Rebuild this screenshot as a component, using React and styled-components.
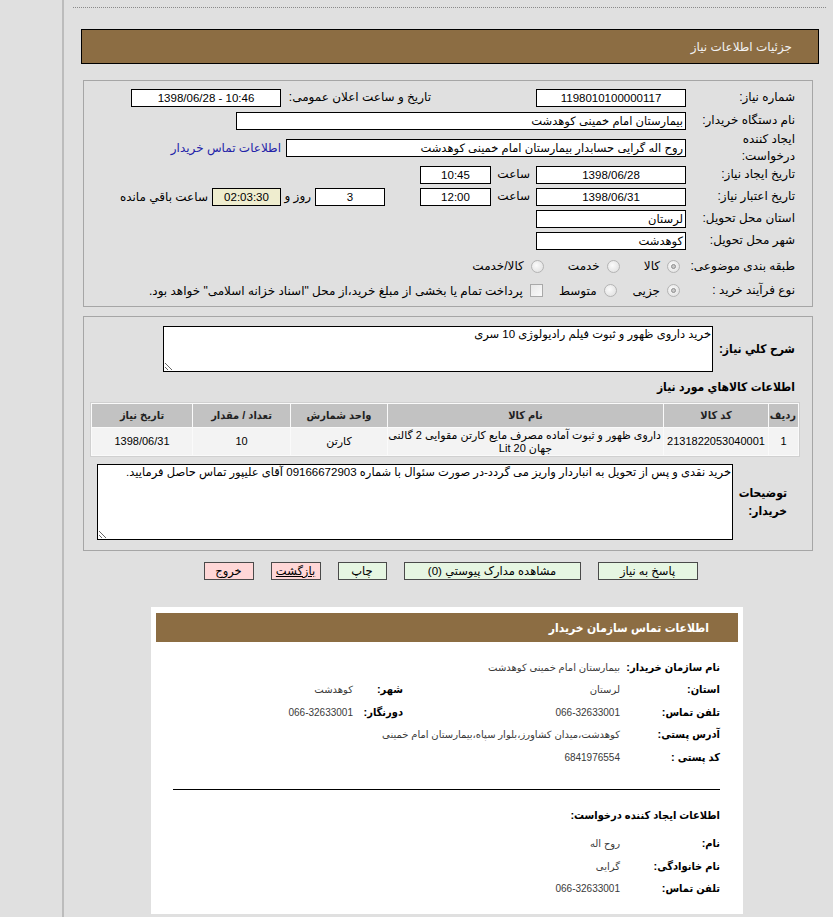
import React from 'react';
import styled, { createGlobalStyle } from 'styled-components';

const GlobalStyle = createGlobalStyle`
  html, body {
    margin: 0;
    padding: 0;
    background: #e0e0e0;
  }
  body {
    font-family: "Liberation Sans", "DejaVu Sans", sans-serif;
    font-size: 12px;
    color: #000;
  }
`;

const BROWN = '#8c6d43';

const Page = styled.div`
  display: flex;
  min-height: 917px;
`;

const Gutter = styled.div`
  width: 62px;
  flex-shrink: 0;
  border-right: 2px solid #bcbcbc;
`;

const Main = styled.div`
  flex: 1;
  min-width: 0;
  padding: 7px 7px 4px 9px;
  direction: rtl;
`;

const DottedRule = styled.div`
  border-top: 1px dotted #8a8a8a;
`;

const TitleBar = styled.div`
  margin: 21px 7px 0 8px;
  height: 33px;
  border: 1px solid #000;
  background: ${BROWN};
  color: #f2f2f2;
  display: flex;
  align-items: center;
  padding-right: 26px;
  font-size: 12px;
`;

const Panel = styled.div`
  margin: ${p => p.top}px 13px 0 10px;
  border: 1px solid #a6a6a6;
  padding: ${p => p.pad};
`;

const Row = styled.div`
  display: flex;
  align-items: center;
  height: ${p => p.h || 23}px;
  padding-right: ${p => p.inset || 0}px;
`;

const Label = styled.div`
  width: ${p => p.w || 109}px;
  flex-shrink: 0;
  box-sizing: border-box;
  padding-right: ${p => p.pr || 0}px;
  white-space: nowrap;
  line-height: 17px;
`;

const BoldLabel = styled.div`
  width: ${p => p.w}px;
  flex-shrink: 0;
  font-weight: bold;
  font-stretch: condensed;
  line-height: 18px;
  white-space: nowrap;
`;

const Field = styled.div`
  width: ${p => p.w}px;
  height: 18px;
  box-sizing: border-box;
  flex-shrink: 0;
  border: 1px solid #000;
  background: ${p => p.bg || '#fff'};
  line-height: 16px;
  font-size: 11.5px;
  padding: 0 2px;
  white-space: nowrap;
  overflow: hidden;
  text-align: ${p => (p.center ? 'center' : 'right')};
  direction: ${p => (p.ltr ? 'ltr' : 'rtl')};
`;

const Gap = styled.div`
  width: ${p => p.w}px;
  flex-shrink: 0;
`;

const Note = styled.span`
  white-space: nowrap;
`;

const Link = styled.a`
  color: #2323a8;
  text-decoration: none;
  white-space: nowrap;
  cursor: pointer;
`;

const Choices = styled.div`
  display: flex;
  align-items: center;
  gap: ${p => p.gap}px;
`;

const Choice = styled.label`
  display: flex;
  align-items: center;
  gap: 7px;
  white-space: nowrap;
`;

const Radio = styled.span`
  width: 13px;
  height: 13px;
  box-sizing: border-box;
  border-radius: 50%;
  border: 1px solid #b4b4b4;
  background: radial-gradient(circle at 40% 40%, #fbfbfb, #dcdcdc);
  display: inline-flex;
  align-items: center;
  justify-content: center;
  &::after {
    content: '';
    width: 5px;
    height: 5px;
    border-radius: 50%;
    box-sizing: border-box;
    border: ${p => (p.checked ? '1px solid #8f8f8f' : 'none')};
    background: ${p => (p.checked ? '#c8c8c8' : 'transparent')};
  }
`;

const Box = styled.span`
  width: 13px;
  height: 13px;
  box-sizing: border-box;
  border: 1px solid #a9a9a9;
  background: linear-gradient(135deg, #e8e8e8, #fafafa);
`;

const TextArea = styled.textarea`
  width: ${p => p.w}px;
  height: ${p => p.h}px;
  box-sizing: border-box;
  flex-shrink: 0;
  border: 1px solid #000;
  background: #fff;
  font: inherit;
  font-size: 11.5px;
  padding: 0 1px;
  resize: both;
  direction: rtl;
  color: #000;
`;

const SectionTitle = styled.div`
  font-weight: bold;
  font-stretch: condensed;
  padding-right: 5px;
  height: 15px;
  line-height: 15px;
  margin: 8px 0 7px;
`;

const Table = styled.table`
  width: 703px;
  table-layout: fixed;
  border-collapse: separate;
  border-spacing: 1px;
  border: 1px solid #d0d0d0;
  background: #fafafa;
  font-size: 11px;
`;

const Th = styled.th`
  height: 23px;
  background: #c2c2c2;
  color: #222;
  font-weight: bold;
  font-stretch: condensed;
  padding: 0 2px;
`;

const Td = styled.td`
  height: 27px;
  background: #f3f3f3;
  text-align: center;
  padding: 0 2px;
  line-height: 13px;
  white-space: nowrap;
`;

const Buttons = styled.div`
  display: flex;
  justify-content: center;
  gap: 17px;
  margin: 11px 0 0;
  padding-left: 2px;
`;

const Button = styled.button`
  width: ${p => p.w}px;
  height: 18px;
  box-sizing: border-box;
  border: 1px solid #4a4a4a;
  background: ${p => (p.red ? '#ffd7d7' : '#e6f6e2')};
  font: inherit;
  font-size: 11.5px;
  color: #000;
  padding: 0;
  line-height: 16px;
  text-decoration: ${p => (p.underline ? 'underline' : 'none')};
`;

const ContactCard = styled.div`
  width: 592px;
  box-sizing: border-box;
  margin: 27px 83px 0 0;
  background: #fff;
  padding: 6px 5px 14px;
`;

const ContactHeader = styled.div`
  height: 29px;
  background: ${BROWN};
  color: #fff;
  font-weight: bold;
  font-stretch: condensed;
  display: flex;
  align-items: center;
  padding-right: 29px;
`;

const ContactBody = styled.div`
  padding: 14px 18px 0 17px;
`;

const InfoGrid = styled.div`
  display: grid;
  grid-template-columns: 100px 217px 50px 1fr;
  grid-auto-rows: 22.5px;
  align-items: center;
`;

const InfoLabel = styled.div`
  font-weight: bold;
  font-size: 11px;
  font-stretch: condensed;
  white-space: nowrap;
`;

const InfoValue = styled.div`
  font-size: 10px;
  color: #3a3a3a;
  white-space: nowrap;
  grid-column: ${p => p.span || 'auto'};
`;

const Rule = styled.div`
  border-top: 1px solid #000;
  margin: 20px 0 18px;
`;

const SubTitle = styled.div`
  font-weight: bold;
  font-size: 11px;
  font-stretch: condensed;
  height: 14px;
  line-height: 14px;
  margin-bottom: 11px;
`;

export default function App() {
  return (
    <>
      <GlobalStyle />
      <Page>
        <Gutter />
        <Main>
          <DottedRule />
          <TitleBar>جزئیات اطلاعات نیاز</TitleBar>

          <Panel top={16} pad="5px 17px 5px 10px">
            <Row>
              <Label>شماره نیاز:</Label>
              <Field w={150} center>1198010100000117</Field>
              <Gap w={105} />
              <Label w={150}>تاریخ و ساعت اعلان عمومی:</Label>
              <Field w={150} center ltr>1398/06/28 - 10:46</Field>
            </Row>
            <Row>
              <Label>نام دستگاه خریدار:</Label>
              <Field w={450}>بیمارستان امام خمینی کوهدشت</Field>
            </Row>
            <Row h={32}>
              <Label>ایجاد کننده<br />درخواست:</Label>
              <Field w={400}>روح اله گرایی حسابدار بیمارستان امام خمینی کوهدشت</Field>
              <Gap w={5} />
              <Link>اطلاعات تماس خریدار</Link>
            </Row>
            <Row h={21}>
              <Label>تاریخ ایجاد نیاز:</Label>
              <Field w={150} center>1398/06/28</Field>
              <Label w={45} pr={6}>ساعت</Label>
              <Field w={71} center>10:45</Field>
            </Row>
            <Row>
              <Label>تاریخ اعتبار نیاز:</Label>
              <Field w={150} center>1398/06/31</Field>
              <Label w={45} pr={6}>ساعت</Label>
              <Field w={71} center>12:00</Field>
              <Gap w={35} />
              <Field w={70} center>3</Field>
              <Label w={34} pr={4}>روز و</Label>
              <Field w={69} center bg="#efedcf">02:03:30</Field>
              <Gap w={4} />
              <Note>ساعت باقي مانده</Note>
            </Row>
            <Row h={21}>
              <Label>استان محل تحویل:</Label>
              <Field w={150}>لرستان</Field>
            </Row>
            <Row>
              <Label>شهر محل تحویل:</Label>
              <Field w={150}>کوهدشت</Field>
            </Row>
            <Row h={28}>
              <Label>طبقه بندی موضوعی:</Label>
              <Gap w={6} />
              <Choices gap={24}>
                <Choice><Radio checked />کالا</Choice>
                <Choice><Radio />خدمت</Choice>
                <Choice><Radio />کالا/خدمت</Choice>
              </Choices>
            </Row>
            <Row h={21}>
              <Label>نوع فرآیند خرید :</Label>
              <Gap w={6} />
              <Choices gap={16}>
                <Choice><Radio checked />جزیی</Choice>
                <Choice><Radio />متوسط</Choice>
                <Choice><Box />پرداخت تمام یا بخشی از مبلغ خرید،از محل "اسناد خزانه اسلامی" خواهد بود.</Choice>
              </Choices>
            </Row>
          </Panel>

          <Panel top={9} pad="9px 12px 10px 13px">
            <Row h={46} inset={5}>
              <BoldLabel w={82}>شرح کلي نياز:</BoldLabel>
              <TextArea w={550} h={46} readOnly value="خرید داروی ظهور و ثبوت فیلم رادیولوژی 10 سری" />
            </Row>
            <SectionTitle>اطلاعات کالاهاي مورد نياز</SectionTitle>
            <Table>
              <colgroup>
                <col style={{ width: 29 }} />
                <col style={{ width: 104 }} />
                <col style={{ width: 275 }} />
                <col style={{ width: 96 }} />
                <col style={{ width: 97 }} />
                <col style={{ width: 100 }} />
              </colgroup>
              <thead>
                <tr>
                  <Th>ردیف</Th>
                  <Th>کد کالا</Th>
                  <Th>نام کالا</Th>
                  <Th>واحد شمارش</Th>
                  <Th>تعداد / مقدار</Th>
                  <Th>تاریخ نیاز</Th>
                </tr>
              </thead>
              <tbody>
                <tr>
                  <Td>1</Td>
                  <Td>2131822053040001</Td>
                  <Td>داروی ظهور و ثبوت آماده مصرف مایع کارتن مقوایی 2 گالنی<br />جهان 20 Lit</Td>
                  <Td>کارتن</Td>
                  <Td>10</Td>
                  <Td>1398/06/31</Td>
                </tr>
              </tbody>
            </Table>
            <Row h={76} inset={13} style={{ marginTop: 7 }}>
              <BoldLabel w={54}>توضیحات<br />خریدار:</BoldLabel>
              <TextArea
                w={636}
                h={76}
                readOnly
                value="خرید نقدی و پس از تحویل به انباردار واریز می گردد-در صورت سئوال با شماره 09166672903 آقای علیپور تماس حاصل فرمایید."
              />
            </Row>
          </Panel>

          <Buttons>
            <Button w={100}>پاسخ به نیاز</Button>
            <Button w={177}>مشاهده مدارک پیوستي (0)</Button>
            <Button w={49}>چاپ</Button>
            <Button w={50} red underline>بازگشت</Button>
            <Button w={50} red>خروج</Button>
          </Buttons>

          <ContactCard>
            <ContactHeader>اطلاعات تماس سازمان خریدار</ContactHeader>
            <ContactBody>
              <InfoGrid>
                <InfoLabel>نام سازمان خریدار:</InfoLabel>
                <InfoValue span="2 / 5">بیمارستان امام خمینی کوهدشت</InfoValue>
                <InfoLabel>استان:</InfoLabel>
                <InfoValue>لرستان</InfoValue>
                <InfoLabel>شهر:</InfoLabel>
                <InfoValue>کوهدشت</InfoValue>
                <InfoLabel>تلفن تماس:</InfoLabel>
                <InfoValue>066-32633001</InfoValue>
                <InfoLabel>دورنگار:</InfoLabel>
                <InfoValue>066-32633001</InfoValue>
                <InfoLabel>آدرس پستی:</InfoLabel>
                <InfoValue span="2 / 5">کوهدشت،میدان کشاورز،بلوار سپاه،بیمارستان امام خمینی</InfoValue>
                <InfoLabel>کد پستی :</InfoLabel>
                <InfoValue span="2 / 5">6841976554</InfoValue>
              </InfoGrid>
              <Rule />
              <SubTitle>اطلاعات ایجاد کننده درخواست:</SubTitle>
              <InfoGrid>
                <InfoLabel>نام:</InfoLabel>
                <InfoValue span="2 / 5">روح اله</InfoValue>
                <InfoLabel>نام خانوادگی:</InfoLabel>
                <InfoValue span="2 / 5">گرایی</InfoValue>
                <InfoLabel>تلفن تماس:</InfoLabel>
                <InfoValue span="2 / 5">066-32633001</InfoValue>
              </InfoGrid>
            </ContactBody>
          </ContactCard>
        </Main>
      </Page>
    </>
  );
}
